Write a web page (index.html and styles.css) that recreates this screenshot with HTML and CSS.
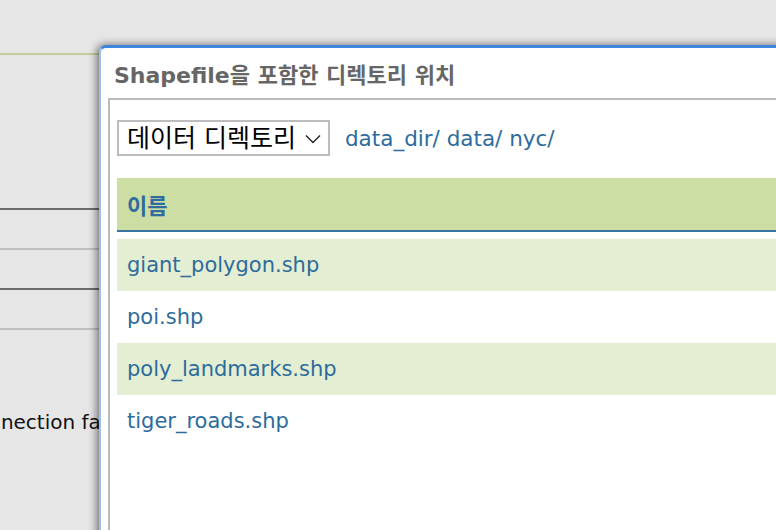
FILE: index.html
```html
<!DOCTYPE html>
<html lang="ko">
<head>
<meta charset="utf-8">
<link rel="stylesheet" href="styles.css">
</head>
<body>
<div class="page">
  <div class="bg">
    <div class="bg-rule"></div>
    <div class="bg-lines">
      <div class="ln dark"></div>
      <div class="ln light"></div>
      <div class="ln dark"></div>
      <div class="ln light"></div>
    </div>
    <div class="bg-msg"><span class="bg-msg-text">Connection failed</span></div>
  </div>

  <div class="dialog">
    <div class="dlg-title">Shapefile<span class="ko-t">을 포함한 디렉토리 위치</span></div>
    <div class="panel">
      <div class="toolbar">
        <div class="select">
          <span class="ko-s">데이터 디렉토리</span>
          <svg class="chev" width="16" height="10" viewBox="0 0 16 10"><path d="M1 1.5 L8 8.5 L15 1.5" fill="none" stroke="#222" stroke-width="1.4"/></svg>
        </div>
        <div class="crumbs">data_dir/ data/ nyc/</div>
      </div>
      <div class="table">
        <div class="thead"><span class="ko-h">이름</span></div>
        <div class="row alt">giant_polygon.shp</div>
        <div class="row">poi.shp</div>
        <div class="row alt">poly_landmarks.shp</div>
        <div class="row">tiger_roads.shp</div>
      </div>
    </div>
  </div>
</div>
</body>
</html>
```
FILE: styles.css
```css
html, body {
  margin: 0;
  padding: 0;
}
body {
  background: #e6e6e6;
  width: 776px;
  height: 530px;
  overflow: hidden;
  font-family: "DejaVu Sans", "Noto Sans CJK KR", sans-serif;
}
.page {
  position: relative;
  width: 776px;
  height: 530px;
  overflow: hidden;
}
.bg {
  padding-top: 53px;
}
.bg-rule {
  height: 2px;
  background: #c2cd98;
  width: 120px;
}
.bg-lines {
  margin-top: 153px;
  width: 110px;
}
.ln {
  height: 2px;
  margin-bottom: 38px;
}
.ln.dark { background: #6b6b6b; }
.ln.light { background: #c0c0c0; }
.bg-msg {
  margin-top: 80px;
  width: 100px;
  overflow: hidden;
  white-space: nowrap;
}
.bg-msg-text {
  display: inline-block;
  margin-left: -38px;
  font-size: 20px;
  color: #111;
}
.dialog {
  position: absolute;
  left: 99px;
  top: 45px;
  width: 760px;
  height: 520px;
  background: #fff;
  border-top: 3px solid #3f84dc;
  border-left: 2px solid #9fbfe8;
  border-top-left-radius: 7px;
  box-shadow: -2px 0 9px rgba(0,0,0,0.55);
}
.dlg-title {
  padding: 9px 0 0 13px;
  height: 50px;
  box-sizing: border-box;
  font-size: 22px;
  font-weight: bold;
  color: #666;
  white-space: nowrap;
}
.ko-t { font-size: 22px; }
.panel {
  margin-left: 7px;
  border: 2px solid #bbbbbb;
  border-right: none;
  height: 480px;
  padding: 20px 0 0 7px;
}
.toolbar {
  display: flex;
  align-items: center;
  gap: 15px;
}
.select {
  display: flex;
  align-items: center;
  gap: 9px;
  height: 36px;
  box-sizing: border-box;
  border: 2px solid #bdbdbd;
  padding: 0 7px 0 8px;
  font-size: 20px;
  color: #000;
}
.ko-s { font-size: 25px; line-height: 1; }
.chev { margin-top: 2px; }
.crumbs {
  font-size: 21.5px;
  color: #2d6c9c;
}
.table {
  margin-top: 22px;
}
.thead {
  height: 54px;
  box-sizing: border-box;
  background: #cddea5;
  border-bottom: 2px solid #3a73a0;
  color: #2d6c9c;
  font-weight: bold;
  padding: 10px 0 0 10px;
  margin-bottom: 7px;
}
.ko-h { font-size: 22px; }
.row {
  height: 52px;
  box-sizing: border-box;
  padding: 14px 0 0 10px;
  font-size: 21px;
  color: #2d6c9c;
}
.row.alt { background: #e3eed2; }
```
